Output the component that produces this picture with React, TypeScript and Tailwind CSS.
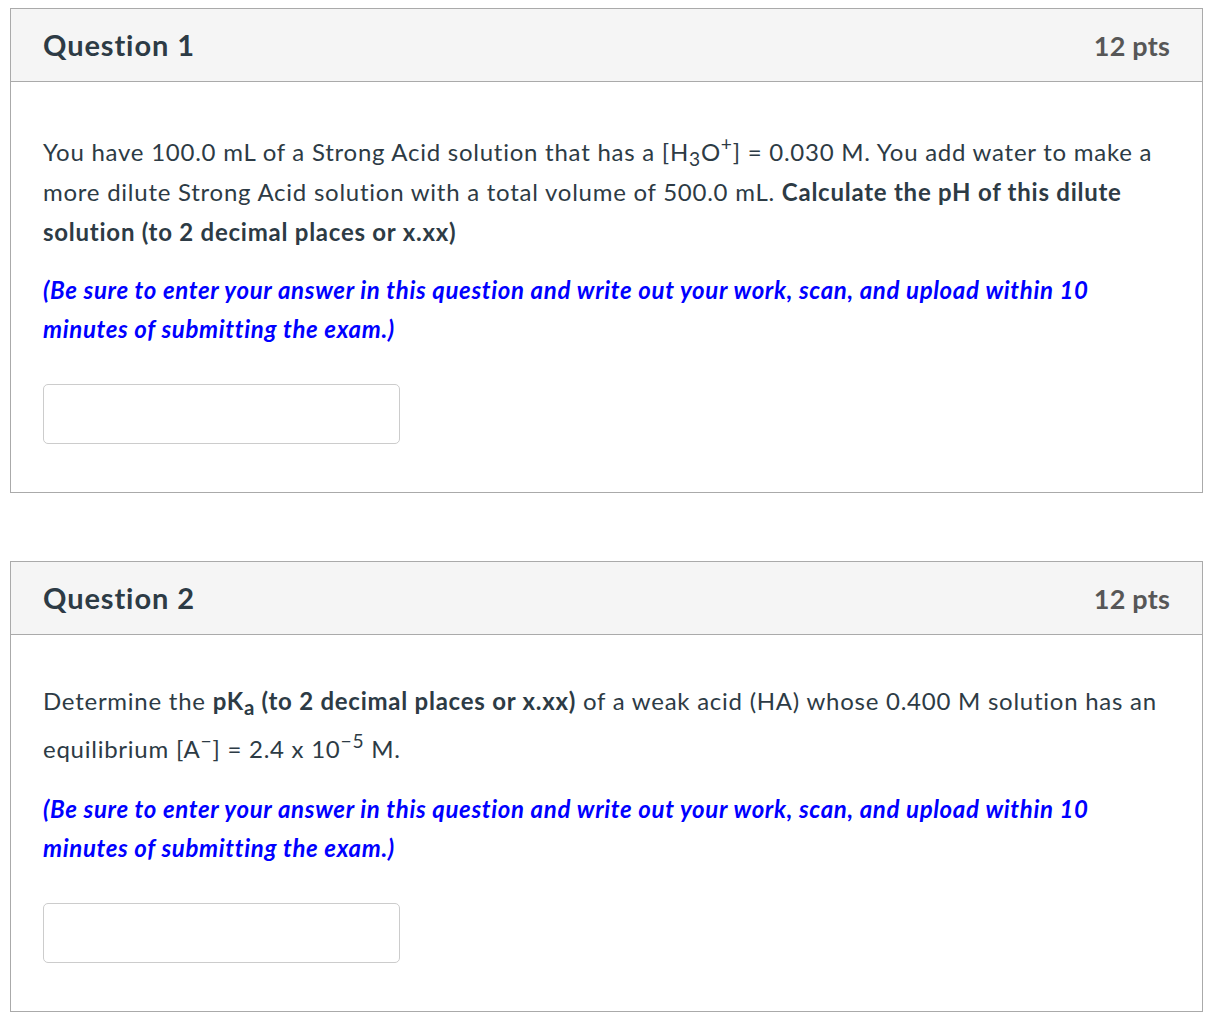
import React from 'react';

const Note: React.FC = () => (
  <p className="text-[24px] leading-[39px] tracking-[0.66px] font-bold italic text-[#0000ff]">
    (Be sure to enter your answer in this question and write out your work, scan, and upload within 10 minutes of submitting the exam.)
  </p>
);

const Question: React.FC<{ title: string; points: string; children: React.ReactNode }> = ({ title, points, children }) => (
  <div className="border border-[#aaaaaa] bg-white">
    <div className="h-[73px] bg-[#f5f5f5] border-b border-[#aaaaaa] px-[32px] flex items-center justify-between">
      <h2 className="text-[29px] tracking-[0.9px] font-bold text-[#2d3b45]">{title}</h2>
      <span className="text-[27px] tracking-[0.2px] font-bold text-[#575757] mt-[2px]">{points}</span>
    </div>
    <div className="px-[32px] pt-[50px] pb-[48px]">
      {children}
      <input
        type="text"
        className="mt-[36px] block w-[357px] h-[60px] border border-[#cccccc] rounded-[5px] bg-white"
      />
    </div>
  </div>
);

export default function App() {
  return (
    <div className="bg-white min-h-screen pt-[8px] pl-[10px] pr-[7px] text-[#2d3b45]" style={{ fontFamily: 'Lato, "Open Sans", sans-serif' }}>
      <div className="flex flex-col gap-[68px]">
        <Question title="Question 1" points="12 pts">
          <p className="text-[24px] leading-[40px] tracking-[0.75px] mb-[18px]">
            You have 100.0 mL of a Strong Acid solution that has a [H<sub className="text-[80%]">3</sub>O<sup className="text-[80%]">+</sup>] = 0.030 M. You add water to make a more dilute Strong Acid solution with a total volume of 500.0 mL.{' '}
            <strong className="font-bold">Calculate the pH of this dilute solution (to 2 decimal places or x.xx)</strong>
          </p>
          <Note />
        </Question>
        <Question title="Question 2" points="12 pts">
          <p className="text-[24px] leading-[48px] tracking-[0.75px] mb-[16px] -mt-[8px]">
            Determine the <strong className="font-bold">pK<sub className="text-[85%]">a</sub> (to 2 decimal places or x.xx)</strong> of a weak acid (HA) whose 0.400 M solution has an equilibrium [A<sup className="text-[80%]">&minus;</sup>] = 2.4 x 10<sup className="text-[80%]">&minus;5</sup> M.
          </p>
          <Note />
        </Question>
      </div>
    </div>
  );
}
